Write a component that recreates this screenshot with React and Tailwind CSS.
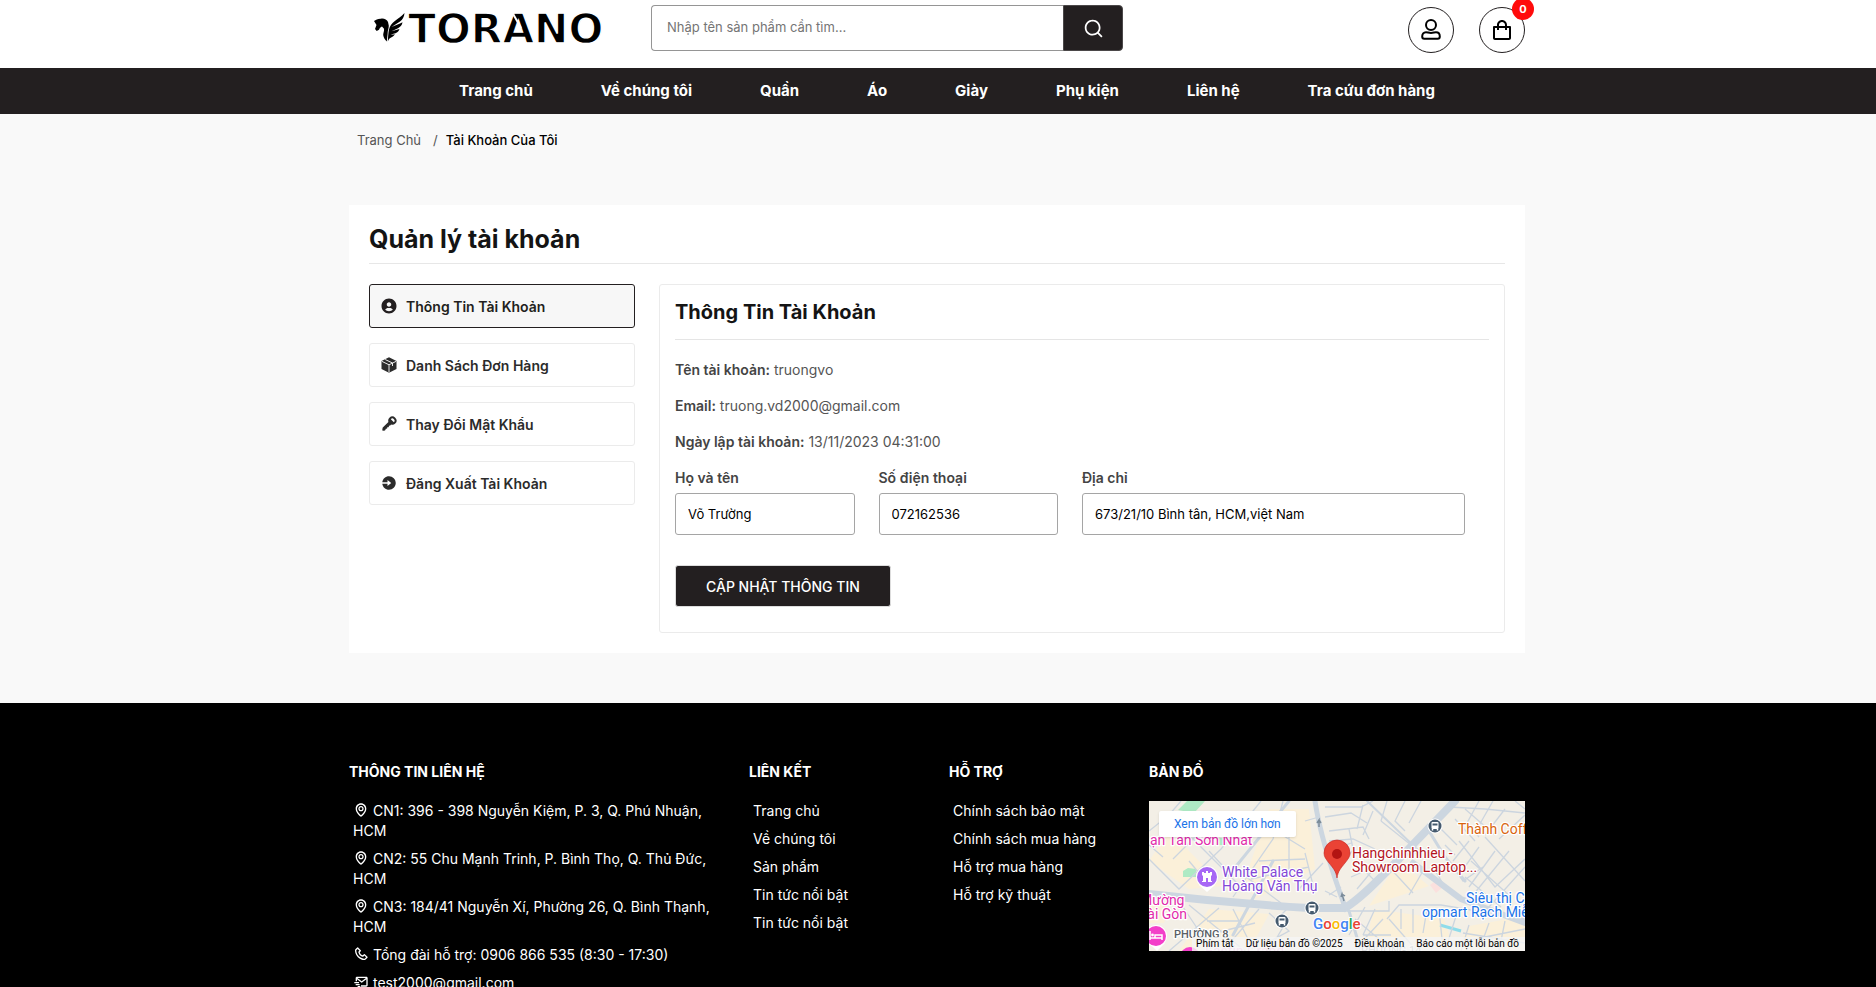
import React, { useState } from "react";
import {
  BiMap,
  BiPhone,
  BiMailSend,
  BiShoppingBag,
  BiSolidUserCircle,
  BiSolidKey,
  BiSolidLogInCircle,
} from "react-icons/bi";
import { RiSearchLine } from "react-icons/ri";

const navLinks = [
  "Trang chủ",
  "Về chúng tôi",
  "Quần",
  "Áo",
  "Giày",
  "Phụ kiện",
  "Liên hệ",
  "Tra cứu đơn hàng",
];

const contacts = [
  { icon: BiMap, text: "CN1: 396 - 398 Nguyễn Kiệm, P. 3, Q. Phú Nhuận, HCM" },
  { icon: BiMap, text: "CN2: 55 Chu Mạnh Trinh, P. Bình Thọ, Q. Thủ Đức, HCM" },
  { icon: BiMap, text: "CN3: 184/41 Nguyễn Xí, Phường 26, Q. Bình Thạnh, HCM" },
  { icon: BiPhone, text: "Tổng đài hỗ trợ: 0906 866 535 (8:30 - 17:30)" },
  { icon: BiMailSend, text: "test2000@gmail.com" },
];

const links = ["Trang chủ", "Về chúng tôi", "Sản phẩm", "Tin tức nổi bật", "Tin tức nổi bật"];

const supports = [
  "Chính sách bảo mật",
  "Chính sách mua hàng",
  "Hỗ trợ mua hàng",
  "Hỗ trợ kỹ thuật",
];

const PackageIcon = () => (
  <svg viewBox="0 0 16 16" className="size-4 shrink-0">
    <path d="M8 .3 15.500 4v8L8 15.700.5 12V4z" fill="currentColor" />
    <path
      d="M.8 4.300 8 7.800l7.200-3.500M8 7.800v7.600M4.200 2.500l7.300 3.500v3"
      fill="none"
      stroke="#fff"
      strokeWidth="0.9"
    />
  </svg>
);

const UserIcon = () => (
  <svg
    viewBox="0 0 24 24"
    className="size-6"
    fill="none"
    stroke="currentColor"
    strokeWidth="2"
    strokeLinejoin="round"
  >
    <circle cx="12" cy="7" r="5" />
    <path d="M7 14.2c1.6 0 2.700.8 5 .8s3.400-.8 5-.8c2.400 0 3.800 1.800 3.800 4.300 0 1.500-.8 2.300-2.100 2.300H5.300c-1.300 0-2.100-.8-2.100-2.300 0-2.500 1.400-4.300 3.800-4.300z" />
  </svg>
);

const Logo = () => (
  <a href="#" aria-label="Torano" className="mt-1.5 block">
    <svg viewBox="0 0 228 36" className="h-9 w-[228px]">
      <g transform="translate(0 2)" fill="#000">
        <path d="M0 8c2-1.500 4-2.500 7-2.300 3-.4 6 .8 7 3.400l.8 3.700c0 3-1.300 5-1.200 8.200l-.8 7.500c-2-2-3.300-4-3.600-6.500.1-2.500 1.200-4 .8-6.200L8 13.500c-1.500.8-2.200 1.300-3 3.300L2.700 18 1 16l1.500-4z" />
        <path d="M30.500 0c-.3 4-2 6.500-4.500 8.500L17.500 14l8.500-3.500 2.500-1.200c-.5 3-1.800 4.500-4.500 6l-6.500 3 8-2.300c-1 3-3 4.200-6 4.800l-3 1.200 4.500-.7c-2 2.700-4 3.200-5.500 4.200-.8 1-1.200 2-1.700 3 .3-4.500.4-8.500 1.200-12C16.500 9 24 7 30.500 0z" />
      </g>
      <text
        x="34"
        y="32"
        fontSize="41"
        fontWeight="700"
        fontFamily="'DejaVu Sans', sans-serif"
        stroke="#fff"
        strokeWidth="1.4"
      >
        TORANO
      </text>
      <path d="m138 1 9 16" stroke="#fff" strokeWidth="2" />
    </svg>
  </a>
);

const Header = () => (
  <header className="bg-white">
    <div className="mx-auto flex max-w-[1202px] items-start pt-[5px] pr-3.5 pb-[15px] pl-[37px]">
      <Logo />
      <form role="search" className="ml-[49px] flex h-[46px] w-[472px]">
        <input
          type="search"
          aria-label="Tìm kiếm sản phẩm"
          placeholder="Nhập tên sản phẩm cần tìm..."
          className="min-w-0 flex-1 rounded-l border border-r-0 border-[#959595] px-[15px] text-[13px] placeholder:text-[#757575] outline-none"
        />
        <button
          type="button"
          aria-label="Tìm kiếm"
          className="flex w-15 items-center justify-center rounded-r border border-[#4b4849] bg-[#231f20] text-white"
        >
          <RiSearchLine size={21} />
        </button>
      </form>
      <div className="ml-auto flex gap-[25px] pt-0.5">
        <a
          href="#"
          aria-label="Tài khoản"
          className="flex size-[46px] items-center justify-center rounded-full border border-[#231f20] text-black"
        >
          <UserIcon />
        </a>
        <a
          href="#"
          aria-label="Giỏ hàng"
          className="relative flex size-[46px] items-center justify-center rounded-full border border-[#231f20] text-black"
        >
          <BiShoppingBag size={24} />
          <span className="absolute -top-2.5 -right-2.5 flex size-[22px] items-center justify-center rounded-full bg-[#ff0b0b] text-[11px] font-bold text-white">
            0
          </span>
        </a>
      </div>
    </div>
    <nav className="bg-[#231f20]">
      <ul className="mx-auto flex h-[46px] max-w-[1202px] items-center justify-center gap-[68px] pb-0.5 pl-[18px]">
        {navLinks.map((item) => (
          <li key={item}>
            <a href="#" className="text-[15px] font-bold whitespace-nowrap text-white">
              {item}
            </a>
          </li>
        ))}
      </ul>
    </nav>
  </header>
);

const menuItems = [
  { label: "Thông Tin Tài Khoản", icon: <BiSolidUserCircle size={18} /> },
  { label: "Danh Sách Đơn Hàng", icon: <PackageIcon /> },
  { label: "Thay Đổi Mật Khẩu", icon: <BiSolidKey size={18} /> },
  { label: "Đăng Xuất Tài Khoản", icon: <BiSolidLogInCircle size={18} /> },
];

const AccountMenu = ({ active, onChange }) => (
  <ul className="w-[266px] shrink-0 space-y-[15px]">
    {menuItems.map((item, index) => (
      <li key={item.label}>
        <button
          type="button"
          onClick={() => onChange(index)}
          className={`flex h-11 w-full items-center gap-2 rounded-[3px] border px-2.5 text-left text-[14px] font-semibold ${
            active === index
              ? "border-[#231f20] bg-[#f7f7f7] text-[#231f20]"
              : "border-[#ebebeb] bg-white text-[#2b2b2b]"
          }`}
        >
          <span className="flex w-[18px] justify-center">{item.icon}</span>
          {item.label}
        </button>
      </li>
    ))}
  </ul>
);

const Field = ({ id, label, value, onChange, className }) => (
  <div className={`pr-6 ${className || ""}`}>
    <label htmlFor={id} className="block text-[14px] leading-5 font-semibold text-[#444]">
      {label}
    </label>
    <input
      id={id}
      type="text"
      value={value}
      onChange={(e) => onChange(id, e.target.value)}
      className="mt-[5px] h-[42px] w-full rounded-[3px] border border-[#a5a5a5] px-3 text-[13px] text-black outline-none"
    />
  </div>
);

const AccountInfo = () => {
  const [form, setForm] = useState({
    fullName: "Võ Trường",
    phone: "072162536",
    address: "673/21/10 Bình tân, HCM,việt Nam",
  });

  const handleChange = (id, value) => {
    setForm((prev) => ({ ...prev, [id]: value }));
  };

  return (
    <section className="min-w-0 flex-1 rounded-[3px] border border-[#ebebeb] px-[15px] pb-[25px]">
      <h2 className="border-b border-[#e5e5e5] py-[11px] text-[20px] leading-8 font-bold text-[#141414]">
        Thông Tin Tài Khoản
      </h2>
      <div className="space-y-4 pt-5 text-[14px] leading-5 text-[#555]">
        <p>
          <b className="font-semibold text-[#444]">Tên tài khoản:</b> truongvo
        </p>
        <p>
          <b className="font-semibold text-[#444]">Email:</b> truong.vd2000@gmail.com
        </p>
        <p>
          <b className="font-semibold text-[#444]">Ngày lập tài khoản:</b> 13/11/2023 04:31:00
        </p>
      </div>
      <form className="pt-4">
        <div className="grid grid-cols-4">
          <Field id="fullName" label="Họ và tên" value={form.fullName} onChange={handleChange} />
          <Field id="phone" label="Số điện thoại" value={form.phone} onChange={handleChange} />
          <Field
            id="address"
            label="Địa chỉ"
            value={form.address}
            onChange={handleChange}
            className="col-span-2"
          />
        </div>
        <button
          type="button"
          className="mt-[30px] h-[42px] rounded-[3px] border border-[#ddd] bg-[#231f20] px-[30px] text-[14px] font-medium text-white uppercase"
        >
          Cập nhật thông tin
        </button>
      </form>
    </section>
  );
};

const BusStop = ({ x, y }) => (
  <g transform={`translate(${x} ${y})`}>
    <circle r="7.500" fill="#fff" />
    <circle r="6.500" fill="#455a6e" />
    <rect x="-3.500" y="-4" width="7" height="7" rx="1" fill="#fff" />
    <path d="M-2.500-1.500h5" stroke="#455a6e" strokeWidth="2" />
    <path d="M-2.500 3v1.500M2.500 3v1.500" stroke="#fff" strokeWidth="1.500" />
  </g>
);

const MapDrawing = () => (
  <svg
    viewBox="0 0 376 150"
    preserveAspectRatio="xMidYMid slice"
    className="block h-[150px] w-full"
    fontFamily="Roboto, sans-serif"
  >
    <rect width="376" height="150" fill="#f3efe6" />
    <g fill="#fbf0d9">
      <path d="M20 30 75 85 40 88 0 60zM60 108l60 5-20 37H30zM120 8l40 0 6 60-60 30-10-20zM225 108l70 10 10 30h-90zM250 60l30 25-60 20zM320 125l56-10v35h-70zM0 100l20 2-5 20H0z" />
    </g>
    <g fill="#aeeac4">
      <path d="M38 0h18L45 12 29 9zM34 70l5-3 8 1v8H34zM68 36l8 2-1 6h-7z" />
    </g>
    <path d="m281 84 8-6 6 7-8 7z" fill="#fbe0de" />
    <path d="m291 124 21 6" stroke="#8fdcea" strokeWidth="3" />

    {/* small streets */}
    <g fill="none" stroke="#ccd5df" strokeWidth="1.300">
      <path d="M0 58 30 88 72 48 96 20 112 0M0 30l20-16L32 0M20 14l70 70M40 60l20 24M60 50l24 26M0 44l14 12M46 36l-22 22M92 72l40 30M84 96l40-58 10-38" />
      <path d="M102 78 160 66M110 60l46-2M140 36v34M120 26l36 22M156 20l14-4M150 88l24-26M166 92l-10-40M176 90l12 6" />
      <path d="M84 108 104 148M70 107 20 150M30 100l32 48M40 104 96 150M110 108l-36 42M120 112l20 18-26 14M140 116l-20 34M58 120h34M66 132l40-10M126 120l14-14" />
      <path d="M176 6h36l12-6M176 16l26-4 16 10M180 30l34-4 6 12M180 40l24-2 22 10M182 50l20-8M214 4l-6 24M224 10l-10 24M200 28l4 20M196 60l10-14M232 20l30 24M202 76l14-6 10 10M208 88l20-24M192 86l-12 8" />
      <path d="m198 110 42 0 0-10M206 118l36 30M216 106l-16 28M226 108l-12 26M214 134l28 0M206 148l28-30M238 118l12-14h42l84 14M252 108l0 20M264 108v24M278 108l-4 24M290 108l4 40M308 112l-12 38M240 118l28 32" />
      <path d="m252 46 10 8 16-6M262 54l6 16M240 66l24 26M274 70l-14 24M284 66l12 20M300 60l14 20 20-14M310 40l36 46 30-28M296 44l10 10M320 40l-16 20M330 46l-20 28M346 50l-26 36M360 50l-36 44M376 66l-36 40M336 36l40 44M322 60l40 36M316 76l36 30" />
      <path d="m306 18 20 22M316 8l30 26M330 0l-12 22 12 14M344 0l-16 28M356 8l-20 26M376 14 350 38M300 6 336 8l40 4M290 26l18 18M366 0l10 8M238 0l-6 20M256 0l-10 20 10 10M272 0l-12 22" />
      <path d="m320 124-8 26M340 122l-10 28M356 120l-6 30M376 128l-60 12M314 132l62 10" />
    </g>

    {/* main roads */}
    <g fill="none" stroke="#ccd6e0" strokeLinecap="round">
      <path d="M0 93C70 101 110 104 160 107h34" strokeWidth="8" />
      <path d="M196 107 C214 96 232 76 248 60L306 0" strokeWidth="8" />
      <path d="M166 0c4 28 14 62 30 106" strokeWidth="5" />
      <path d="M264 62 312 98 376 122" strokeWidth="6" />
      <path d="M218 0 270 50" strokeWidth="2" />
      <path d="M280 30 296 56l20 24M140 0 80 74M124 60 84 134" strokeWidth="3" />
      <path d="m200 110 12 40" strokeWidth="3" />
    </g>
    <g stroke="#7b8b99" strokeWidth="1.500" fill="none">
      <path d="M170 26v-7l-2 3m2-3 2 3M195 100l-2-7-1 3m1-3 3 2" />
    </g>

    <BusStop x={286} y={25} />
    <BusStop x={163} y={107} />
    <BusStop x={133} y={120} />

    <circle cx="58" cy="76" r="11" fill="#fff" />
    <path d="m50 84 8 7 8-7z" fill="#fff" />
    <circle cx="58" cy="76" r="10" fill="#a768f5" />
    <path d="M53 74v-3h2v1h2v-2h2v2h2v-1h2v3l-1 1v5h1v1h-4v-4h-2v4h-4v-1h1v-5z" fill="#fff" />

    <path d="M0 142h16l-8 8z" fill="#fff" />
    <circle cx="7" cy="135" r="11" fill="#fff" />
    <circle cx="7" cy="135" r="10" fill="#f33fc9" />
    <path d="M1 130v9M1 137h12v2M13 138v-4H6v3" stroke="#fff" strokeWidth="1.500" fill="none" />
    <circle cx="3.500" cy="134" r="1.400" fill="#fff" />
    <circle cx="41" cy="156" r="10" fill="#f33fc9" />

    {/* place names */}
    <g stroke="#fff" strokeWidth="2.500" strokeLinejoin="round" paintOrder="stroke" fontSize="14">
      <text x="1" y="44" fill="#e22bab">ạn Tân Sơn Nhất</text>
      <text x="73" y="76" fill="#8347d6">White Palace</text>
      <text x="73" y="90" fill="#8347d6">Hoàng Văn Thụ</text>
      <text x="-9" y="104" fill="#e22bab">Mường</text>
      <text x="-10" y="118" fill="#e22bab">Sài Gòn</text>
      <text x="25" y="137" fill="#5a6066" fontSize="11" fontWeight="500">PHƯỜNG 8</text>
      <text x="56" y="155" fill="#f3a3df">Eastin Grand</text>
      <text x="212" y="153" fill="#8a8f94" fontSize="11">PHƯỜNG 14</text>
      <text x="203" y="57" fill="#b3141d">Hangchinhhieu -</text>
      <text x="203" y="71" fill="#b3141d">Showroom Laptop...</text>
      <text x="309" y="33" fill="#d9640d">Thành Coffee</text>
      <text x="317" y="102" fill="#1a73e8">Siêu thị Co.</text>
      <text x="273" y="116" fill="#1a73e8">opmart Rạch Miễu</text>
    </g>

    <path
      d="M188 77c-1-7-4-10-8-15-3-4-5-6-5-10a13 13 0 0 1 26 0c0 4-2 6-5 10-4 5-7 8-8 15z"
      fill="#ea4335"
      stroke="#c5221f"
      strokeWidth=".6"
    />
    <circle cx="188" cy="53" r="5" fill="#b31412" />

    <text
      x="164"
      y="128"
      fontSize="15"
      fontWeight="500"
      stroke="#fff"
      strokeWidth="2"
      paintOrder="stroke"
    >
      <tspan fill="#4285f4">G</tspan>
      <tspan fill="#ea4335">o</tspan>
      <tspan fill="#fbbc04">o</tspan>
      <tspan fill="#4285f4">g</tspan>
      <tspan fill="#34a853">l</tspan>
      <tspan fill="#ea4335">e</tspan>
    </text>
  </svg>
);

const StoreMap = () => (
  <div className="relative overflow-hidden font-normal">
    <MapDrawing />
    <a
      href="#"
      className="absolute top-2.5 left-2.5 flex h-[26px] items-center rounded-xs bg-white px-[15px] font-[Roboto,sans-serif] text-[12px] text-[#1a73e8] shadow"
    >
      Xem bản đồ lớn hơn
    </a>
    <div className="absolute right-0 bottom-0 flex h-3.5 items-center gap-3 bg-[#f5f5f5]/80 pr-1.5 pl-1 font-[Roboto,sans-serif] text-[10px] whitespace-nowrap text-black">
      <button type="button">Phím tắt</button>
      <span>Dữ liệu bản đồ ©2025</span>
      <a href="#">Điều khoản</a>
      <a href="#">Báo cáo một lỗi bản đồ</a>
    </div>
  </div>
);

const FooterColumn = ({ title, className, children }) => (
  <div className={className}>
    <h3 className="mb-[19px] text-[14px] leading-5 font-bold uppercase">{title}</h3>
    {children}
  </div>
);

const FooterLinks = ({ items }) => (
  <ul className="space-y-2 pl-1">
    {items.map((item, index) => (
      <li key={index}>
        <a href="#">{item}</a>
      </li>
    ))}
  </ul>
);

const Footer = () => (
  <footer className="bg-black pt-[59px] pb-5 text-[14px] leading-5 text-white">
    <div className="mx-auto grid max-w-[1222px] grid-cols-6 pl-[22px]">
      <FooterColumn title="Thông tin liên hệ" className="col-span-2 pr-6">
        <ul className="space-y-2 pl-1">
          {contacts.map(({ icon: Icon, text }) => (
            <li key={text}>
              <Icon size={16} className="mr-1 inline align-[-2px]" />
              {text}
            </li>
          ))}
        </ul>
      </FooterColumn>
      <FooterColumn title="Liên kết">
        <FooterLinks items={links} />
      </FooterColumn>
      <FooterColumn title="Hỗ trợ">
        <FooterLinks items={supports} />
      </FooterColumn>
      <FooterColumn title="Bản đồ" className="col-span-2 pr-6">
        <StoreMap />
      </FooterColumn>
    </div>
  </footer>
);

const App = () => {
  const [active, setActive] = useState(0);

  return (
    <div className="min-h-screen bg-[#f9f9f9] font-[Inter,sans-serif]">
      <Header />
      <main className="mx-auto max-w-[1202px] pr-3.5 pb-[50px] pl-3">
        <nav
          aria-label="breadcrumb"
          className="flex items-center px-2 pt-4 text-[13px] leading-5 text-[#555]"
        >
          <a href="#">Trang Chủ</a>
          <span className="pr-2 pl-3">/</span>
          <span className="font-medium text-black">Tài Khoản Của Tôi</span>
        </nav>
        <div className="mt-[55px] bg-white p-5">
          <h1 className="border-b border-[#e7e7e7] pb-2.5 text-[25px] leading-7 font-bold text-[#141414]">
            Quản lý tài khoản
          </h1>
          <div className="flex gap-6 pt-5">
            <AccountMenu active={active} onChange={setActive} />
            <AccountInfo />
          </div>
        </div>
      </main>
      <Footer />
    </div>
  );
};

export default App;
